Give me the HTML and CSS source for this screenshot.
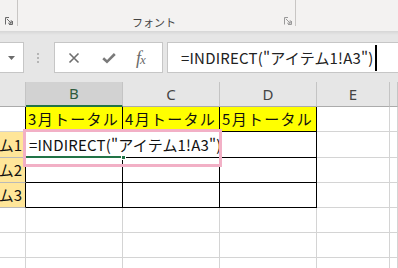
FILE: index.html
```html
<!DOCTYPE html>
<html lang="ja">
<head>
<meta charset="utf-8">
<link rel="stylesheet" href="styles.css">
</head>
<body>
<div class="app">
  <div class="ribbon">
    <div class="grp grp-left">
      <svg class="launch" width="8" height="8" viewBox="0 0 8 8"><path d="M0.5 7.5V0.5H4M7.5 4V7.5H4M1.8 1.8L6.2 6.2M6.2 3.2V6.2H3.2" fill="none" stroke="#6b6b6b" stroke-width="1"/></svg>
    </div>
    <div class="grp grp-font">
      <span class="grp-label">フォント</span>
      <svg class="launch" width="8" height="8" viewBox="0 0 8 8"><path d="M0.5 7.5V0.5H4M7.5 4V7.5H4M1.8 1.8L6.2 6.2M6.2 3.2V6.2H3.2" fill="none" stroke="#9a9a9a" stroke-width="1"/></svg>
    </div>
  </div>
  <div class="fbar">
    <div class="namebox">
      <svg width="7" height="4" viewBox="0 0 7 4"><path d="M0 0H7L3.5 4Z" fill="#6b6b6b"/></svg>
    </div>
    <div class="grip"><i></i><i></i><i></i></div>
    <div class="fbtns">
      <svg class="ico" width="12" height="12" viewBox="0 0 12 12"><path d="M1.5 1.5L10.5 10.5M10.5 1.5L1.5 10.5" stroke="#6e6e6e" stroke-width="1.6"/></svg>
      <svg class="ico" width="14" height="12" viewBox="0 0 14 12"><path d="M1.2 6.2L5 9.8L12.8 2" fill="none" stroke="#7a7a7a" stroke-width="2.6"/></svg>
      <span class="fx">f<small>x</small></span>
    </div>
    <div class="finput"><span class="ftext">=INDIRECT("アイテム1!A3")</span><span class="caret"></span></div>
  </div>
  <div class="sheet">
    <div class="hd"></div>
    <div class="hd sel">B</div>
    <div class="hd">C</div>
    <div class="hd">D</div>
    <div class="hd">E</div>
    <div class="hd"></div>

    <div class="c bk-r"></div>
    <div class="c yl bk-r bk-b">3月トータル</div>
    <div class="c yl bk-r bk-b">4月トータル</div>
    <div class="c yl bk-r bk-b">5月トータル</div>
    <div class="c"></div>
    <div class="c"></div>

    <div class="c gold bk-r"><span>アイテム1</span></div>
    <div class="c edit bk-r bk-b">=INDIRECT("アイテム1!A3")<span class="selline"></span><span class="handle"></span></div>
    <div class="c bk-r bk-b"></div>
    <div class="c"></div>
    <div class="c"></div>

    <div class="c gold bk-r"><span>アイテム2</span></div>
    <div class="c bk-r bk-b"></div>
    <div class="c bk-r bk-b"></div>
    <div class="c bk-r bk-b"></div>
    <div class="c"></div>
    <div class="c"></div>

    <div class="c gold bk-r"><span>アイテム3</span></div>
    <div class="c bk-r bk-b"></div>
    <div class="c bk-r bk-b"></div>
    <div class="c bk-r bk-b"></div>
    <div class="c"></div>
    <div class="c"></div>

    <div class="c"></div><div class="c"></div><div class="c"></div><div class="c"></div><div class="c"></div><div class="c"></div>
    <div class="c"></div><div class="c"></div><div class="c"></div><div class="c"></div><div class="c"></div><div class="c"></div>
    <div class="c"></div><div class="c"></div><div class="c"></div><div class="c"></div><div class="c"></div><div class="c"></div>

    <div class="editbox"></div>
  </div>
</div>
</body>
</html>
```

FILE: styles.css
```css
html, body {
  margin: 0;
  padding: 0;
  background: #ffffff;
  overflow: hidden;
}
body {
  width: 398px;
  height: 268px;
  font-family: "Noto Sans CJK JP", "Noto Sans", sans-serif;
}
.app {
  width: 398px;
  height: 268px;
  overflow: hidden;
  display: flex;
  flex-direction: column;
}

/* Ribbon */
.ribbon {
  height: 31px;
  flex: none;
  display: flex;
  background: #f3f2f1;
  box-sizing: border-box;
}
.grp {
  height: 26px;
  box-sizing: border-box;
  border-right: 1px solid #c8c6c4;
  display: flex;
  align-items: flex-end;
  position: relative;
}
.grp-left {
  width: 18px;
  padding-left: 5px;
  box-sizing: border-box;
}
.grp-font {
  width: 278px;
  justify-content: flex-end;
  padding-right: 3px;
}
.launch {
  display: block;
  margin-bottom: 1px;
}
.grp-label {
  position: absolute;
  left: 114px;
  bottom: -3px;
  font-size: 11px;
  color: #444;
  line-height: 14px;
}

/* Formula bar */
.fbar {
  height: 51px;
  flex: none;
  background: #e6e6e6;
  background-image: linear-gradient(#d6d6d6, #e6e6e6 4px);
  display: flex;
  align-items: flex-start;
  padding-top: 11px;
  box-sizing: border-box;
}
.namebox, .fbtns, .finput {
  height: 31px;
  box-sizing: border-box;
  background: #fff;
  border: 1px solid #c6c6c6;
}
.namebox {
  width: 25px;
  margin-left: -1px;
  display: flex;
  align-items: center;
  justify-content: flex-end;
  padding-right: 8px;
}
.namebox svg { display: block; }
.grip {
  width: 3px;
  margin-left: 13px;
  margin-right: 14px;
  height: 31px;
  display: flex;
  flex-direction: column;
  justify-content: center;
  gap: 2px;
}
.grip i {
  display: block;
  width: 2px;
  height: 2px;
  background: #b5b5b5;
}
.fbtns {
  width: 109px;
  display: flex;
  align-items: center;
  padding-left: 13px;
}
.fbtns .ico { display: block; flex: none; }
.fbtns .ico:first-child { margin-right: 22px; }
.fbtns .ico:nth-child(2) { margin-right: 20px; }
.fx {
  font-family: "Liberation Serif", serif;
  font-style: italic;
  font-size: 18px;
  color: #6a6a6a;
  line-height: 1;
  letter-spacing: -1px;
}
.fx small {
  font-size: 13px;
}
.finput {
  flex: 1;
  margin-left: 4px;
  border-right: none;
  display: flex;
  align-items: center;
  padding-left: 13px;
  white-space: nowrap;
}
.ftext {
  font-size: 15px;
  color: #222;
  line-height: 20px;
  letter-spacing: 0.2px;
}
.caret {
  display: block;
  width: 2px;
  height: 26px;
  background: #000;
  margin-left: 1px;
}

/* Sheet */
.sheet {
  flex: 1;
  position: relative;
  display: grid;
  grid-template-columns: 26px 97px 97px 97px 73px 1fr;
  grid-template-rows: 25px 25px 26px 25px 25px 25px 25px 25px;
}
.hd {
  background: #e6e6e6;
  border-right: 1px solid #c4c4c4;
  border-bottom: 1px solid #ababab;
  box-sizing: border-box;
  font-family: "Noto Sans", "Open Sans", sans-serif;
  font-size: 15px;
  color: #444;
  display: flex;
  align-items: center;
  justify-content: center;
  line-height: 1;
}
.hd.sel {
  background: #d2d2d2;
  color: #2f5b3d;
  border-bottom: 2px solid #217346;
}
.c {
  box-sizing: border-box;
  border-right: 1px solid #d4d4d4;
  border-bottom: 1px solid #d4d4d4;
  background: #fff;
  font-size: 15px;
  color: #111;
  display: flex;
  align-items: center;
  white-space: nowrap;
  overflow: hidden;
  padding-left: 2px;
  line-height: 20px;
}
.c.bk-r { border-right-color: #000; }
.c.bk-b { border-bottom-color: #000; }
.c.yl {
  background: #ffff00;
  letter-spacing: 1.3px;
}
.c.gold {
  background: #ffe699;
  border-bottom-color: #b9b9b9;
  justify-content: flex-end;
  padding-left: 0;
  padding-right: 3px;
}
.c.edit {
  grid-column: span 2;
  position: relative;
  overflow: visible;
  padding-left: 3px;
  z-index: 1;
  letter-spacing: 0.2px;
}
.selline {
  position: absolute;
  left: 0;
  bottom: -1px;
  width: 97px;
  height: 2px;
  background: #217346;
}
.handle {
  position: absolute;
  left: 95px;
  bottom: -3px;
  width: 5px;
  height: 5px;
  background: #217346;
  border: 1px solid #fff;
  box-sizing: border-box;
}
.editbox {
  position: absolute;
  left: 23px;
  top: 47px;
  width: 199px;
  height: 38px;
  box-sizing: border-box;
  border: 3px solid #f2b0c6;
  pointer-events: none;
  z-index: 2;
}
```
